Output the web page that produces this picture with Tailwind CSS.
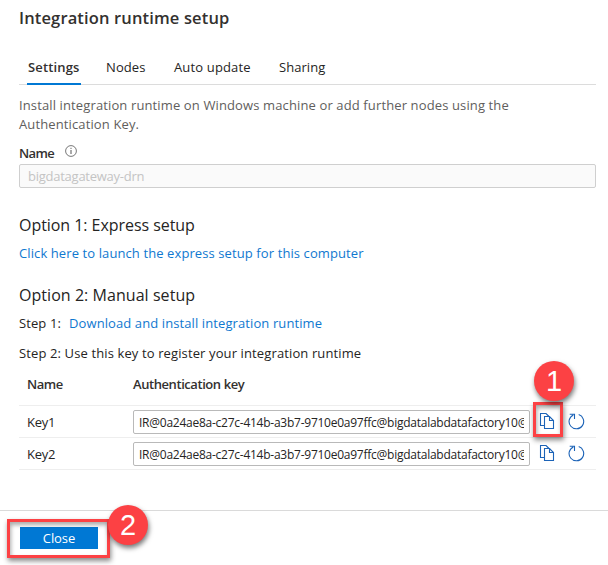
<!DOCTYPE html>
<html lang="en">
<head>
<meta charset="utf-8">
<title>Integration runtime setup</title>
<script src="https://cdn.jsdelivr.net/npm/@tailwindcss/browser@4"></script>
</head>
<body class="relative h-[565px] w-[608px] overflow-hidden bg-white font-['Open_Sans','Noto_Sans',sans-serif] text-[13px] leading-5 tracking-[0.1px] text-[#252423]">
<svg class="hidden">
  <symbol id="copy" viewBox="0 0 16 18"><g fill="none" stroke="#1c63b7" stroke-width="1.1"><path d="M5.500 12.500H1.500V.5H7L10 3.500"/><path d="M5.500 3.500H10.500L14.500 7.500V15.500H5.500Z"/><path d="M10.500 3.500V7.500H14.500"/></g></symbol>
  <symbol id="refresh" viewBox="0 0 18 18"><path d="M11.700 1.600A7.300 7.300 0 1 1 6.300 1.900M2.700 1.200H7.500V6" fill="none" stroke="#1c63b7" stroke-width="1.1"/></symbol>
</svg>
<main class="flex h-[510px] flex-col pr-3 pl-[19px]">
  <h1 class="mt-[6px] h-6 text-[16.5px] leading-6 font-semibold tracking-[0.14px] text-[#33312f]">Integration runtime setup</h1>
  <nav class="mt-[25px] flex h-[30px] gap-[25px] border-b border-[#dcdcdc] pl-2 leading-6">
    <span class="-mb-px h-[30px] w-[54px] border-b-2 border-[#0078d4] pl-px font-semibold tracking-[0.15px] whitespace-nowrap text-[#33312f]">Settings</span>
    <span class="w-[43px] tracking-[0.1px] whitespace-nowrap">Nodes</span>
    <span class="w-[80px] tracking-[0.15px] whitespace-nowrap">Auto update</span>
    <span class="tracking-[0.05px] whitespace-nowrap">Sharing</span>
  </nav>
  <p class="mt-[11px] h-[38px] leading-[19px] tracking-[0.125px] whitespace-nowrap text-[#5f5e5d]">Install integration runtime on Windows machine or add further nodes using the<br>Authentication Key.</p>
  <div class="mt-[9px] flex h-5 gap-[10px]"><span class="w-9 font-semibold tracking-[-0.6px] text-[#33312f]">Name</span>
    <svg class="mt-[2px] size-3" viewBox="0 0 12 12" fill="none" stroke="#555"><circle cx="6" cy="6" r="5.400" stroke-width=".8"/><path d="M6 5v4M6 2.800v1.100"/></svg>
  </div>
  <div class="mt-px h-[24px] rounded-[2px] border border-[#cfcfcf] bg-[#fafafa] pl-2 leading-[23px] tracking-[-0.25px] text-[#c4c4c4]">bigdatagateway-drn</div>
  <h2 class="mt-[25px] h-6 text-[16px] leading-6 tracking-[-0.05px]">Option 1: Express setup</h2>
  <a class="mt-[6px] h-5 text-[#0f78d0]">Click here to launch the express setup for this computer</a>
  <h2 class="mt-5 h-6 text-[16px] leading-6 tracking-[0.05px]">Option 2: Manual setup</h2>
  <div class="mt-[6px] flex h-5"><span class="w-[50px]">Step 1:</span><a class="text-[#0f78d0]">Download and install integration runtime</a></div>
  <p class="mt-[10px] h-5 tracking-[0.12px]">Step 2: Use this key to register your integration runtime</p>
  <div class="mt-[10px] grid h-[33px] w-[577px] grid-cols-[106px_1fr] border-b border-[#eee] pl-2 leading-[22px] font-semibold tracking-[-0.43px] text-[#33312f]"><span>Name</span><span>Authentication key</span></div>
  <div class="flex h-8 w-[577px] items-center border-b border-[#eee] pl-2"><span class="w-[106px] tracking-[-0.25px]">Key1</span>
    <div class="h-6 w-[397px] rounded-[2px] border border-[#b9b9b9] px-[5px] text-[12px] leading-[23px] tracking-[-0.25px]"><div class="overflow-hidden whitespace-nowrap">IR@0a24ae8a-c27c-414b-a3b7-9710e0a97ffc@bigdatalabdatafactory10@</div></div>
    <svg class="ml-[9px] h-[18px] w-4"><use href="#copy"/></svg><svg class="ml-[12px] size-[18px]"><use href="#refresh"/></svg></div>
  <div class="flex h-8 w-[577px] items-center border-b border-[#eee] pl-2"><span class="w-[106px] tracking-[-0.25px]">Key2</span>
    <div class="h-6 w-[397px] rounded-[2px] border border-[#b9b9b9] px-[5px] text-[12px] leading-[23px] tracking-[-0.25px]"><div class="overflow-hidden whitespace-nowrap">IR@0a24ae8a-c27c-414b-a3b7-9710e0a97ffc@bigdatalabdatafactory10@</div></div>
    <svg class="ml-[9px] h-[18px] w-4"><use href="#copy"/></svg><svg class="ml-[12px] size-[18px]"><use href="#refresh"/></svg></div>
</main>
<footer class="h-[55px] border-t border-[#dadada] pt-4 pl-5"><button class="block h-[22px] w-[78px] bg-[#0078d4] text-[13px] leading-[22px] tracking-[-0.1px] text-white">Close</button></footer>
<div class="absolute top-[402px] left-[533px] h-[35px] w-[30px] border-3 border-[#fc4144] shadow-[1px_3px_5px_#0007,inset_1px_3px_4px_#0005]"></div>
<div class="absolute top-[361px] left-[534px] size-10 rounded-full bg-[#fc4144] text-center font-['Liberation_Sans',sans-serif] text-[29px] leading-10 text-white shadow-[1px_3px_5px_#0008]">1</div>
<div class="absolute top-[519px] left-[7px] h-[39px] w-[103px] border-3 border-[#fc4144] shadow-[1px_3px_5px_#0007,inset_1px_3px_4px_#0005]"></div>
<div class="absolute top-[505px] left-[108px] size-10 rounded-full bg-[#fc4144] text-center font-['Liberation_Sans',sans-serif] text-[29px] leading-10 text-white shadow-[1px_3px_5px_#0008]">2</div>
</body>
</html>
